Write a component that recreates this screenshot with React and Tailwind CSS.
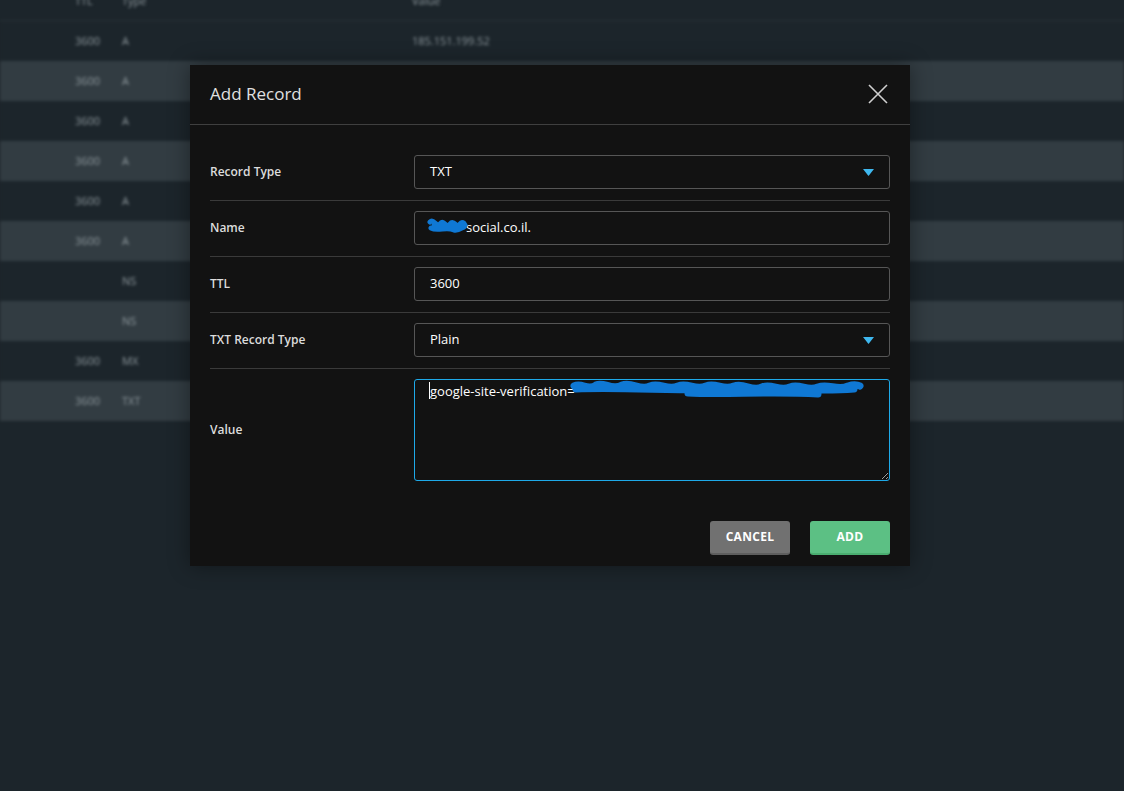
import { useState } from 'react';

const rows = [
  { ttl: '3600', type: 'A', value: '185.151.199.52' },
  { ttl: '3600', type: 'A', value: '185.151.199.53' },
  { ttl: '3600', type: 'A', value: '185.151.199.54' },
  { ttl: '3600', type: 'A', value: '185.151.199.55' },
  { ttl: '3600', type: 'A', value: '185.151.199.56' },
  { ttl: '3600', type: 'A', value: '185.151.199.57' },
  { ttl: '', type: 'NS', value: 'ns1.example.net.' },
  { ttl: '', type: 'NS', value: 'ns2.example.net.' },
  { ttl: '3600', type: 'MX', value: '10 mail.example.net.' },
  { ttl: '3600', type: 'TXT', value: 'v=spf1 include:_spf ~all' },
];

const Caret = () => (
  <svg width="11" height="7" viewBox="0 0 11 7" className="shrink-0">
    <path d="M0 0 H11 L5.5 7 Z" fill="#3fb8ef" />
  </svg>
);

// hand-drawn redaction marks over the private parts of the values
const Scribble = ({ width, height, d, w = 6 }) => (
  <svg width={width} height={height} viewBox={`0 0 ${width} ${height}`} className="pointer-events-none">
    <path d={d} fill="none" stroke="#0f78d4" strokeWidth={w} strokeLinecap="round" strokeLinejoin="round" />
  </svg>
);

const FormRow = ({ label, last, children }) => (
  <div className={`flex items-center pt-[10px] ${last ? 'pb-[10px]' : 'pb-[11px] border-b border-[#3a3a3a]'}`}>
    <div className="w-[204px] shrink-0 text-[12px] font-semibold text-[#dcdcdc]">{label}</div>
    <div className="flex-1">{children}</div>
  </div>
);

const Field = ({ children, select }) => (
  <div className="h-[34px] flex items-center justify-between px-[15px] border border-[#565656] rounded-[3px] bg-[#121212] text-[13px] text-white">
    <div className="flex items-center">{children}</div>
    {select && <Caret />}
  </div>
);

export default function App() {
  const [value] = useState('google-site-verification=');

  return (
    <div className="relative w-[1124px] h-[791px] overflow-hidden bg-[#1c252b]" style={{ fontFamily: '"Open Sans", "Noto Sans", sans-serif' }}>
      {/* blurred records table behind the dialog */}
      <div className="blur-[1.4px] text-[11px] text-[#8e989d]">
        <div className="h-[21px] flex items-end border-b border-[#2a343a]">
          <div className="flex w-full leading-none pb-[14px]">
            <span className="w-[122px] pl-[75px]">TTL</span>
            <span className="w-[290px]">Type</span>
            <span>Value</span>
          </div>
        </div>
        {rows.map((r, i) => (
          <div key={i} className={`h-[40px] flex items-center ${i % 2 ? 'bg-[#323c42]' : 'bg-[#1c252b]'}`}>
            <span className="w-[122px] pl-[75px]">{r.ttl}</span>
            <span className="w-[290px]">{r.type}</span>
            <span>{r.value}</span>
          </div>
        ))}
      </div>

      {/* dialog */}
      <div className="absolute left-[190px] top-[65px] w-[720px] bg-[#121212] shadow-[0_0_20px_rgba(0,0,0,0.4)]">
        <div className="h-[60px] flex items-center justify-between px-5 pb-[2px] border-b border-[#3f3f3f]">
          <h2 className="text-[17px] text-[#e0e0e0]">Add Record</h2>
          <svg width="20" height="20" viewBox="0 0 20 20" className="mr-[2px]">
            <path d="M1 1 L19 19 M19 1 L1 19" stroke="#d0d0d0" strokeWidth="1.6" />
          </svg>
        </div>

        <div className="px-5 pt-5">
          <FormRow label="Record Type">
            <Field select>TXT</Field>
          </FormRow>
          <FormRow label="Name">
            <Field>
              <span className="relative inline-flex items-center">
                <span className="absolute -left-[4px] -top-[4px]">
                  <Scribble
                    width="42"
                    height="24"
                    w={5}
                    d="M4 8 C8 4, 10 14, 14 10 C18 4, 20 16, 24 10 C28 5, 30 15, 34 10 C36 7, 38 9, 39 11 M5 14 C12 18, 20 12, 28 16 C32 17, 36 14, 38 13 M8 11 L30 12"
                  />
                </span>
                <span className="pl-[36px]">social.co.il.</span>
              </span>
            </Field>
          </FormRow>
          <FormRow label="TTL">
            <Field>3600</Field>
          </FormRow>
          <FormRow label="TXT Record Type">
            <Field select>Plain</Field>
          </FormRow>
          <FormRow label="Value" last>
            <div className="relative">
              <textarea
                readOnly
                value={value}
                className="block w-full h-[102px] resize-y bg-[#121212] border border-[#1ea9e8] rounded-[3px] px-[15px] py-[2px] text-[13px] text-white outline-none"
              />
              <span className="absolute left-[15px] top-[3px] w-px h-[17px] bg-white" />
              <span className="absolute left-[154px] top-[-2px]">
                <Scribble
                  width="296"
                  height="24"
                  w={7}
                  d="M6 9 C14 5, 20 14, 28 8 C36 4, 44 14, 54 8 C64 4, 72 14, 82 9 C92 5, 100 14, 110 9 C120 5, 128 14, 138 9 C148 5, 156 14, 166 9 C176 5, 184 15, 194 10 C204 6, 212 15, 222 10 C232 6, 240 15, 250 10 C260 6, 270 14, 280 9 C286 7, 290 8, 292 9 M8 12 C60 10, 120 15, 180 12 C220 11, 250 15, 286 12 M120 16 C160 18, 200 14, 250 17"
                />
              </span>
            </div>
          </FormRow>
        </div>

        <div className="flex justify-end gap-5 px-5 pt-[30px] pb-[11px]">
          <button className="w-[80px] h-[34px] rounded-[3px] bg-[#717171] border-b-2 border-[#5e5e5e] text-[12px] font-bold text-white tracking-[0.3px]">
            CANCEL
          </button>
          <button className="w-[80px] h-[34px] rounded-[3px] bg-[#5cc084] border-b-2 border-[#4aae70] text-[12px] font-bold text-white tracking-[0.3px]">
            ADD
          </button>
        </div>
      </div>
    </div>
  );
}
